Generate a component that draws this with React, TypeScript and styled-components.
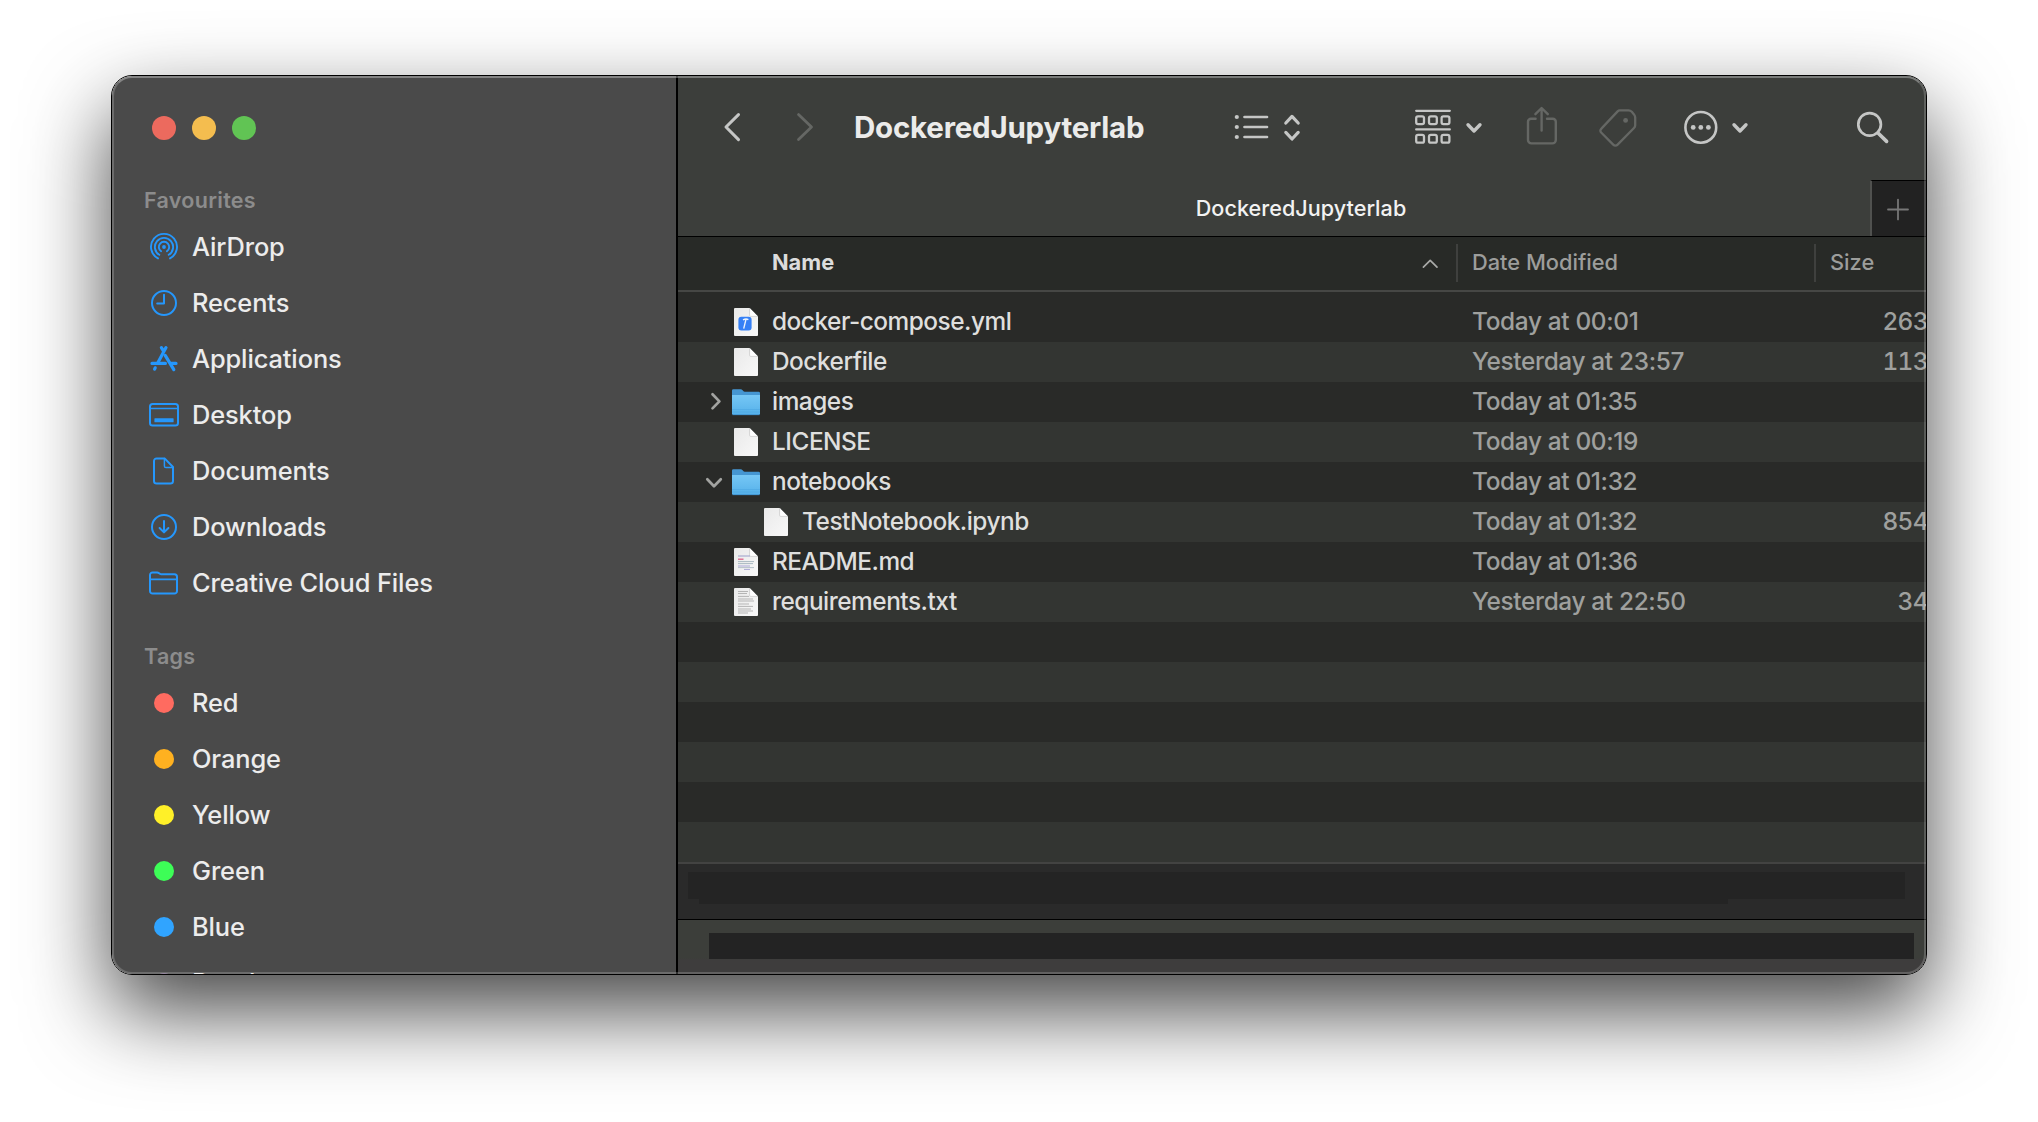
import React from "react";
import styled, { createGlobalStyle } from "styled-components";

const GlobalStyle = createGlobalStyle`
  * { box-sizing: border-box; }
  html, body { margin: 0; padding: 0; background: #fff; }
  body {
    font-family: Inter, "Liberation Sans", Arial, sans-serif;
    -webkit-font-smoothing: antialiased;
    overflow: hidden;
  }
  svg { display: block; flex: none; }
`;

const Desktop = styled.div`
  width: 2038px;
  height: 1122px;
  padding: 75px 111px;
  background: #fff;
  overflow: hidden;
`;

const Window = styled.div`
  position: relative;
  display: flex;
  width: 1816px;
  height: 900px;
  border: 1px solid #000;
  border-radius: 21px;
  box-shadow: 0 36px 84px rgba(0, 0, 0, 0.73);
`;

const WindowBody = styled.div`
  display: flex;
  flex: 1;
  min-width: 0;
  border-radius: 20px;
  overflow: hidden;
`;

const Highlight = styled.div`
  position: absolute;
  inset: 0;
  border: 2px solid rgba(255, 255, 255, 0.19);
  border-top-color: rgba(255, 255, 255, 0.32);
  border-radius: 20px;
  pointer-events: none;
`;

/* ---------- Sidebar ---------- */

const Sidebar = styled.aside`
  width: 566px;
  flex: none;
  background: #4a4a4a;
  border-right: 2px solid #000;
  overflow: hidden;
`;

const TrafficLights = styled.div`
  display: flex;
  gap: 16px;
  height: 105px;
  padding: 40px 0 0 40px;
`;

const Light = styled.span<{ $color: string }>`
  width: 24px;
  height: 24px;
  border-radius: 50%;
  background: ${(p) => p.$color};
`;

const SectionTitle = styled.h2<{ $spaced?: boolean }>`
  margin: ${(p) => (p.$spaced ? "26px" : "0")} 0 0;
  padding-left: 32px;
  height: 38px;
  line-height: 38px;
  font-size: 21.5px;
  font-weight: 600;
  letter-spacing: 0.3px;
  color: #8c8c8c;
`;

const SidebarItem = styled.div`
  display: flex;
  align-items: center;
  height: 56px;
  padding-left: 36px;
  gap: 12px;
`;

const SidebarIcon = styled.span`
  display: flex;
  justify-content: center;
  width: 32px;
  color: #2597fc;
`;

const SidebarLabel = styled.span`
  font-size: 25.4px;
  font-weight: 500;
  letter-spacing: -0.1px;
  line-height: 56px;
  color: #ececec;
  white-space: nowrap;
`;

const TagDot = styled.span<{ $color: string }>`
  width: 20px;
  height: 20px;
  margin-right: 1px;
  border-radius: 50%;
  background: ${(p) => p.$color};
`;

/* ---------- Content ---------- */

const Content = styled.main`
  display: flex;
  flex-direction: column;
  flex: 1;
  min-width: 0;
  background: #292a28;
`;

const Toolbar = styled.header`
  display: flex;
  align-items: center;
  height: 104px;
  padding-left: 45px;
  background: #3c3e3b;
  color: #c5c6c5;
`;

const ToolGroup = styled.div<{ $gap?: number; $before?: number; $dim?: boolean }>`
  display: flex;
  align-items: center;
  gap: ${(p) => p.$gap ?? 0}px;
  margin-left: ${(p) => p.$before ?? 0}px;
  color: ${(p) => (p.$dim ? "#656764" : "inherit")};
`;

const Title = styled.h1`
  margin: 0 0 2px 40px;
  width: 380px;
  font-size: 29.5px;
  font-weight: 700;
  letter-spacing: -0.23px;
  line-height: 40px;
  color: #ebebea;
`;

const TabBar = styled.div`
  display: flex;
  height: 56px;
  background: #3c3e3b;
`;

const Tab = styled.div`
  flex: 1;
  padding-left: 54px;
  text-align: center;
  font-size: 21.6px;
  font-weight: 500;
  letter-spacing: 0.03px;
  line-height: 56px;
  color: #f2f2f2;
`;

const NewTab = styled.div`
  display: flex;
  align-items: center;
  justify-content: center;
  width: 56px;
  padding-right: 3px;
  background: #222222;
  border-top: 1px solid #000;
  border-left: 2px solid #50514f;
  color: #777;
`;

const columns = "778px 358px 1fr";

const ListHeader = styled.div`
  display: grid;
  grid-template-columns: ${columns};
  align-items: start;
  height: 56px;
  padding-top: 7px;
  background: #282a27;
  border-top: 1px solid #000;
  border-bottom: 2px solid #464745;
`;

const HeaderCell = styled.div<{ $primary?: boolean }>`
  display: flex;
  align-items: center;
  justify-content: space-between;
  height: 38px;
  padding: ${(p) => (p.$primary ? "0 17px 2px 94px" : "0 0 2px 14px")};
  border-left: ${(p) => (p.$primary ? "0" : "2px solid #3f403e")};
  font-size: 21.8px;
  font-weight: ${(p) => (p.$primary ? 700 : 500)};
  color: ${(p) => (p.$primary ? "#dcdcdc" : "#9c9d9b")};
`;

const Rows = styled.div`
  padding-top: 10px;
`;

const Row = styled.div`
  display: grid;
  grid-template-columns: ${columns};
  height: 40px;
  background: #292a28;
  &:nth-child(even) {
    background: #333532;
  }
`;

const NameCell = styled.div<{ $depth: number }>`
  display: flex;
  padding-left: ${(p) => p.$depth * 30}px;
`;

const FileName = styled.span`
  padding-left: 12px;
  font-size: 24.4px;
  font-weight: 500;
  letter-spacing: -0.48px;
  line-height: 39px;
  color: #dfdfde;
  white-space: nowrap;
`;

const DateCell = styled.div`
  padding-left: 16px;
  font-size: 24.4px;
  font-weight: 500;
  letter-spacing: -0.34px;
  line-height: 39px;
  color: #9fa09e;
  white-space: nowrap;
`;

const SizeCell = styled.div`
  justify-self: end;
  margin-right: -2px;
  font-size: 24.4px;
  font-weight: 500;
  letter-spacing: -0.6px;
  font-variant-numeric: tabular-nums;
  line-height: 39px;
  color: #9fa09e;
`;

const PathBar = styled.div`
  height: 57px;
  padding: 8px 0 0 10px;
  border-top: 2px solid #434342;
  background: #2a2a2a;
`;

const PathMask = styled.div`
  width: 1217px;
  height: 27px;
  background: #242424;
`;

const PathMaskTail = styled.div`
  width: 1029px;
  height: 5px;
  margin-left: 11px;
  background: #242424;
`;

const StatusBar = styled.div`
  flex: 1;
  padding: 13px 12px 0 31px;
  border-top: 1px solid #000;
  background: linear-gradient(#3c3e3a 0 38px, #3e3d3d 40px);
`;

const StatusMask = styled.div`
  height: 26px;
  background: #232323;
`;

/* ---------- Icons ---------- */

const stroke = {
  fill: "none",
  stroke: "currentColor",
  strokeLinecap: "round" as const,
  strokeLinejoin: "round" as const,
};

const AirDropIcon = () => (
  <svg width="30" height="30" viewBox="0 0 30 30" {...stroke} strokeWidth="1.9">
    <circle cx="15" cy="15" r="1.9" fill="currentColor" stroke="none" />
    <path d="M12.1 19.3A5.2 5.2 0 1 1 17.9 19.3" />
    <path d="M10.3 22.8A9.1 9.1 0 1 1 19.7 22.8" />
    <path d="M9 26.4A13 13 0 1 1 21 26.4" />
  </svg>
);

const ClockIcon = () => (
  <svg width="28" height="28" viewBox="0 0 28 28" {...stroke} strokeWidth="2">
    <circle cx="14" cy="14" r="12" />
    <path d="M14 5.8V14.6H7.2" />
  </svg>
);

const AppsIcon = () => (
  <svg width="28" height="28" viewBox="0 0 28 28" {...stroke} strokeWidth="3.2">
    <path d="M16 2.6L8 17.4M11.4 2.6L13.4 6" />
    <path d="M2 18.4H15.4M21.4 18.4H26" />
    <path d="M15.2 10.4L23.8 24.6" />
    <path d="M5.2 22.8L4.6 24.2" />
  </svg>
);

const DesktopIcon = () => (
  <svg width="30" height="24" viewBox="0 0 30 24" {...stroke} strokeWidth="2">
    <rect x="1" y="1" width="28" height="21.6" rx="2.6" />
    <path d="M1 5.4H29" strokeWidth="1.5" />
    <rect x="5.4" y="15.2" width="19.2" height="4.1" rx="0.6" fill="currentColor" stroke="none" />
  </svg>
);

const DocumentIcon = () => (
  <svg width="22" height="28" viewBox="0 0 22 28" {...stroke} strokeWidth="2">
    <path d="M3.6 1.4H11.6L20 10V24A2.6 2.6 0 0 1 17.4 26.6H3.6A2.6 2.6 0 0 1 1 24V4A2.6 2.6 0 0 1 3.6 1.4Z" />
    <path d="M11.4 1.6V9A1.6 1.6 0 0 0 13 10.6H20" strokeWidth="1.5" />
  </svg>
);

const DownloadIcon = () => (
  <svg width="28" height="28" viewBox="0 0 28 28" {...stroke} strokeWidth="2">
    <circle cx="14" cy="14" r="12" />
    <path d="M14 8V19M9.6 15L14 19.4L18.4 15" />
  </svg>
);

const FolderOutlineIcon = () => (
  <svg width="30" height="24" viewBox="0 0 30 24" {...stroke} strokeWidth="2">
    <path d="M1 4A2.6 2.6 0 0 1 3.6 1.4H8.2C9.8 1.4 10.4 3.2 12 3.2H25.4A2.6 2.6 0 0 1 28 5.8V20A2.6 2.6 0 0 1 25.4 22.6H3.6A2.6 2.6 0 0 1 1 20Z" />
    <path d="M1 8.4H28" strokeWidth="1.6" />
  </svg>
);

const BackIcon = () => (
  <svg width="18" height="32" viewBox="0 0 18 32" {...stroke} strokeWidth="3">
    <path d="M15.5 2.6L3 15L15.5 27.6" />
  </svg>
);

const ForwardIcon = () => (
  <svg width="18" height="32" viewBox="0 0 18 32" {...stroke} strokeWidth="2.8">
    <path d="M2.5 2.6L15.5 15L2.5 27.6" />
  </svg>
);

const ListIcon = () => (
  <svg width="35" height="28" viewBox="0 0 35 28" {...stroke} strokeWidth="2.7">
    {[3, 13, 23].map((y) => (
      <g key={y}>
        <circle cx="2.8" cy={y} r="2.1" fill="currentColor" stroke="none" />
        <path d={`M10.5 ${y}H33`} />
      </g>
    ))}
  </svg>
);

const UpDownIcon = () => (
  <svg width="18" height="32" viewBox="0 0 18 32" {...stroke} strokeWidth="3.2">
    <path d="M2.8 11L9 4.4L15.2 11M2.8 20.4L9 27L15.2 20.4" />
  </svg>
);

const GroupIcon = () => (
  <svg width="38" height="38" viewBox="0 0 38 38" {...stroke} strokeWidth="2.3">
    {[1.8, 20.4].map((y) => (
      <g key={y}>
        <path d={`M2.2 ${y}H35.8`} />
        {[2.2, 15, 27.6].map((x) => (
          <rect key={x} x={x} y={y + 5.5} width="7.8" height="7.8" rx="1.8" />
        ))}
      </g>
    ))}
  </svg>
);

const MenuChevron = () => (
  <svg width="18" height="14" viewBox="0 0 18 14" {...stroke} strokeWidth="3.4">
    <path d="M3 3.8L9 10L15 3.8" />
  </svg>
);

const ShareIcon = () => (
  <svg width="32" height="44" viewBox="0 0 32 44" {...stroke} strokeWidth="2.4">
    <path d="M9.6 12.8H5A3 3 0 0 0 2 15.8V34A3.4 3.4 0 0 0 5.4 37.4H26.4A3.4 3.4 0 0 0 29.8 34V15.8A3 3 0 0 0 26.8 12.8H21" />
    <path d="M15.6 24.6V2.2M9.4 8.2L15.6 2L21.8 8.2" />
  </svg>
);

const TagIcon = () => (
  <svg width="38" height="38" viewBox="0 0 38 38" {...stroke} strokeWidth="2.3">
    <path d="M20.6 1.4H29.6C31 1.4 31.8 1.8 32.8 2.8L35 5.4C35.8 6.4 36.2 7.2 36.2 8.6V16.2C36.2 17.4 35.8 18.2 35 19L18.6 35.6C17.2 37 15.6 37 14.2 35.6L2.4 23.8C1 22.4 1 21 2.4 19.6L18.6 2.4C19.2 1.8 19.8 1.4 20.6 1.4Z" />
    <circle cx="26.6" cy="11.4" r="2.4" fill="currentColor" stroke="none" />
  </svg>
);

const MoreIcon = () => (
  <svg width="36" height="36" viewBox="0 0 36 36" {...stroke} strokeWidth="2.6">
    <circle cx="17.8" cy="17.4" r="15.4" />
    <g fill="currentColor" stroke="none">
      <circle cx="10.2" cy="17.4" r="2.4" />
      <circle cx="17.8" cy="17.4" r="2.4" />
      <circle cx="25.4" cy="17.4" r="2.4" />
    </g>
  </svg>
);

const SearchIcon = () => (
  <svg width="36" height="36" viewBox="0 0 36 36" {...stroke} strokeWidth="2.7">
    <circle cx="13.6" cy="14.4" r="11.3" />
    <path d="M22 23L30.6 31.4" strokeWidth="3.6" />
  </svg>
);

const PlusIcon = () => (
  <svg width="24" height="24" viewBox="0 0 24 24" {...stroke} strokeWidth="1.8">
    <path d="M12 2.6V22.4M2 12.5H22" />
  </svg>
);

const SortIcon = () => (
  <svg width="18" height="16" viewBox="0 0 18 16" {...stroke} strokeWidth="1.7" color="#a9aaa8">
    <path d="M2.4 13.2L9.2 6.4L16 13.2" />
  </svg>
);

const Disclosure = ({ state }: { state?: "open" | "closed" }) => (
  <svg width="54" height="40" viewBox="0 0 54 40" {...stroke} strokeWidth="2.7" color="#a2a3a1">
    {state === "closed" && <path d="M34.5 12.3L41.4 19.4L34.5 26.4" />}
    {state === "open" && <path d="M29.3 17.2L36 24.2L42.8 17.2" />}
  </svg>
);

type Kind = "yaml" | "blank" | "folder" | "markdown" | "text";

const FolderIcon = () => (
  <svg width="28" height="40" viewBox="0 0 28 40">
    <defs>
      <linearGradient id="folder-front" x1="0" y1="0" x2="0" y2="1">
        <stop offset="0" stopColor="#76c7f5" />
        <stop offset="1" stopColor="#55b1ea" />
      </linearGradient>
    </defs>
    <path d="M0 8.6Q0 7.2 1.4 7.2H8.6Q9.8 7.2 10.6 8.2Q11.8 9.8 13 9.8H26.6Q28 9.8 28 11.2V16H0Z" fill="#4596d2" />
    <path d="M0 13H28V31.6Q28 33 26.6 33H1.4Q0 33 0 31.6Z" fill="url(#folder-front)" />
    <path d="M0 27.6H28M0 30H28" stroke="#4ba5df" strokeWidth="0.6" />
    <path d="M0.4 32.7H27.6" stroke="#3d8dc9" strokeWidth="0.8" />
  </svg>
);

const FileIcon = ({ kind }: { kind: Kind }) => {
  if (kind === "folder") return <FolderIcon />;
  return (
    <svg width="28" height="40" viewBox="0 0 28 40">
      <defs>
        <linearGradient id="paper" x1="0" y1="0" x2="1" y2="1">
          <stop offset="0" stopColor="#e9e9e9" />
          <stop offset="1" stopColor="#f8f8f8" />
        </linearGradient>
      </defs>
      <path d="M3 6H17.6L26 14.4V33Q26 34 25 34H3Q2 34 2 33V7Q2 6 3 6Z" fill="url(#paper)" />
      <path d="M17.6 6V13.2Q17.6 14.4 18.8 14.4H26Z" fill="#fff" />
      <path d="M17.6 6V13.2Q17.6 14.4 18.8 14.4H26" fill="none" stroke="#bdbdbd" strokeWidth="0.6" />
      {kind === "yaml" && (
        <>
          <rect x="6.4" y="14.8" width="13.2" height="13.8" rx="3" fill="#3580f6" />
          <path d="M11 17.8Q14 16.2 16.4 17.6M13.9 17.6L11.7 26.6" fill="none" stroke="#e9f1fd" strokeWidth="1.4" />
        </>
      )}
      {kind === "markdown" && (
        <g fill="none" strokeWidth="1">
          <path d="M6 14H18" stroke="#9a9ec9" />
          <path d="M6 17.2H11.5" stroke="#dc5f87" strokeWidth="1.3" />
          <path d="M6 19.6H22M6 21.6H21" stroke="#a9b9c2" />
          <path d="M6 24H18M12 27.4H18" stroke="#a9a6d6" />
          <path d="M6 25.6H22" stroke="#b6c2c9" />
        </g>
      )}
      {kind === "text" && (
        <g fill="none" stroke="#b5b5b5" strokeWidth="1">
          <path d="M6 9.5H16M6 11.5H15M6 14.4H17M6 17H21M6 19H22M6 22H17M6 24.4H21M6 27H19M6 29H21M6 31H16" />
        </g>
      )}
    </svg>
  );
};

/* ---------- Data ---------- */

const favourites: [string, React.FC][] = [
  ["AirDrop", AirDropIcon],
  ["Recents", ClockIcon],
  ["Applications", AppsIcon],
  ["Desktop", DesktopIcon],
  ["Documents", DocumentIcon],
  ["Downloads", DownloadIcon],
  ["Creative Cloud Files", FolderOutlineIcon],
];

const tags: [string, string][] = [
  ["Red", "#ff6b60"],
  ["Orange", "#ffb120"],
  ["Yellow", "#fff028"],
  ["Green", "#3dfd57"],
  ["Blue", "#30a4ff"],
  ["Purple", "#7d6a88"],
];

interface Entry {
  name: string;
  kind: Kind;
  date: string;
  size?: string;
  depth?: number;
  state?: "open" | "closed";
}

const entries: Entry[] = [
  { name: "docker-compose.yml", kind: "yaml", date: "Today at 00:01", size: "263" },
  { name: "Dockerfile", kind: "blank", date: "Yesterday at 23:57", size: "113" },
  { name: "images", kind: "folder", date: "Today at 01:35", state: "closed" },
  { name: "LICENSE", kind: "blank", date: "Today at 00:19" },
  { name: "notebooks", kind: "folder", date: "Today at 01:32", state: "open" },
  { name: "TestNotebook.ipynb", kind: "blank", date: "Today at 01:32", size: "854", depth: 1 },
  { name: "README.md", kind: "markdown", date: "Today at 01:36" },
  { name: "requirements.txt", kind: "text", date: "Yesterday at 22:50", size: "34" },
];

const emptyRows = [0, 1, 2, 3, 4, 5];

export default function App() {
  return (
    <Desktop>
      <GlobalStyle />
      <Window>
        <WindowBody>
          <Sidebar>
            <TrafficLights>
              <Light $color="#ec6a5e" />
              <Light $color="#f4bd4f" />
              <Light $color="#61c454" />
            </TrafficLights>
            <SectionTitle>Favourites</SectionTitle>
            {favourites.map(([label, Icon]) => (
              <SidebarItem key={label}>
                <SidebarIcon>
                  <Icon />
                </SidebarIcon>
                <SidebarLabel>{label}</SidebarLabel>
              </SidebarItem>
            ))}
            <SectionTitle $spaced>Tags</SectionTitle>
            {tags.map(([label, color]) => (
              <SidebarItem key={label}>
                <SidebarIcon>
                  <TagDot $color={color} />
                </SidebarIcon>
                <SidebarLabel>{label}</SidebarLabel>
              </SidebarItem>
            ))}
          </Sidebar>

          <Content>
            <Toolbar>
              <BackIcon />
              <ToolGroup $before={55} $dim>
                <ForwardIcon />
              </ToolGroup>
              <Title>DockeredJupyterlab</Title>
              <ToolGroup $gap={14}>
                <ListIcon />
                <UpDownIcon />
              </ToolGroup>
              <ToolGroup $before={113} $gap={13}>
                <GroupIcon />
                <MenuChevron />
              </ToolGroup>
              <ToolGroup $before={43} $gap={41} $dim>
                <ShareIcon />
                <TagIcon />
              </ToolGroup>
              <ToolGroup $before={46} $gap={12}>
                <MoreIcon />
                <MenuChevron />
              </ToolGroup>
              <ToolGroup $before={107}>
                <SearchIcon />
              </ToolGroup>
            </Toolbar>

            <TabBar>
              <Tab>DockeredJupyterlab</Tab>
              <NewTab>
                <PlusIcon />
              </NewTab>
            </TabBar>

            <ListHeader>
              <HeaderCell $primary>
                Name
                <SortIcon />
              </HeaderCell>
              <HeaderCell>Date Modified</HeaderCell>
              <HeaderCell>Size</HeaderCell>
            </ListHeader>

            <Rows>
              {entries.map((e) => (
                <Row key={e.name}>
                  <NameCell $depth={e.depth ?? 0}>
                    <Disclosure state={e.state} />
                    <FileIcon kind={e.kind} />
                    <FileName>{e.name}</FileName>
                  </NameCell>
                  <DateCell>{e.date}</DateCell>
                  {e.size && <SizeCell>{e.size}</SizeCell>}
                </Row>
              ))}
              {emptyRows.map((i) => (
                <Row key={i} />
              ))}
            </Rows>

            <PathBar>
              <PathMask />
              <PathMaskTail />
            </PathBar>
            <StatusBar>
              <StatusMask />
            </StatusBar>
          </Content>
        </WindowBody>
        <Highlight />
      </Window>
    </Desktop>
  );
}
